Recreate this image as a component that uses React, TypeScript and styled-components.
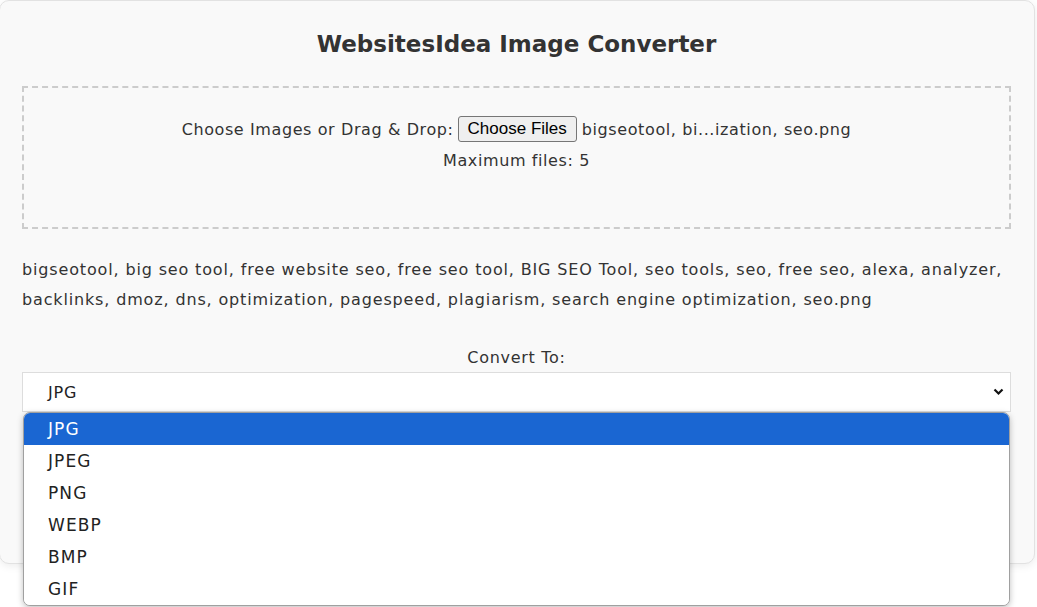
import React from "react";
import styled, { createGlobalStyle } from "styled-components";

const GlobalStyle = createGlobalStyle`
  html, body {
    margin: 0;
    padding: 0;
    background: #ffffff;
    font-family: "DejaVu Sans", "Noto Sans", sans-serif;
    color: #222;
  }
`;

const formats = ["JPG", "JPEG", "PNG", "WEBP", "BMP", "GIF"];

const keywordLines = [
  "bigseotool, big seo tool, free website seo, free seo tool, BIG SEO Tool, seo tools, seo, free seo, alexa, analyzer,",
  "backlinks, dmoz, dns, optimization, pagespeed, plagiarism, search engine optimization, seo.png",
];

const Chevron = () => (
  <svg width="11" height="8" viewBox="0 0 11 8">
    <path d="M1.5 1.5 L5.5 5.5 L9.5 1.5" fill="none" stroke="#111" strokeWidth="2.2" />
  </svg>
);

export default function App() {
  return (
    <>
      <GlobalStyle />
      <Styled.Page>
        <Styled.Card>
          <Styled.Title>WebsitesIdea Image Converter</Styled.Title>
          <Styled.DropZone>
            <Styled.Line>
              Choose Images or Drag &amp; Drop:
              <Styled.FileButton type="button">Choose Files</Styled.FileButton>
              bigseotool, bi...ization, seo.png
            </Styled.Line>
            <Styled.Line>Maximum files: 5</Styled.Line>
          </Styled.DropZone>
          <Styled.Keywords>
            {keywordLines.map((l) => (
              <Styled.KeywordLine key={l}>{l}</Styled.KeywordLine>
            ))}
          </Styled.Keywords>
          <Styled.Label>Convert To:</Styled.Label>
          <Styled.SelectWrap>
            <Styled.Select>
              <span>JPG</span>
              <Chevron />
            </Styled.Select>
            <Styled.Menu>
              {formats.map((f, i) => (
                <Styled.Option key={f} $active={i === 0}>
                  {f}
                </Styled.Option>
              ))}
            </Styled.Menu>
          </Styled.SelectWrap>
          <Styled.Spacer />
        </Styled.Card>
      </Styled.Page>
    </>
  );
}

const Styled = {
  Page: styled.div`
    width: 1037px;
    height: 607px;
    overflow: hidden;
    background: #ffffff;
  `,
  Card: styled.div`
    box-sizing: border-box;
    width: 1036px;
    margin-left: -1px;
    padding: 0 23px 0 22px;
    background: #f9f9f9;
    border: 1px solid #e2e2e2;
    border-radius: 10px;
    box-shadow: 0 2px 8px rgba(0, 0, 0, 0.08);
  `,
  Title: styled.h1`
    margin: 0;
    padding: 30px 0 0;
    height: 55px;
    text-align: center;
    font-size: 23px;
    font-weight: 600;
    color: #333;
  `,
  DropZone: styled.div`
    box-sizing: border-box;
    height: 143px;
    border: 2px dashed #cccccc;
    padding: 26px 10px 0;
    text-align: center;
  `,
  Line: styled.div`
    line-height: 31px;
    font-size: 16px;
    letter-spacing: 0.6px;
    color: #333;
  `,
  FileButton: styled.button`
    font-family: Arial, "Liberation Sans", sans-serif;
    font-size: 17px;
    letter-spacing: 0;
    height: 26px;
    padding: 0 9px;
    margin: 0 5px 0 4px;
    background: #efefef;
    border: 1px solid #767676;
    border-radius: 3px;
    color: #000;
    vertical-align: 1px;
  `,
  Keywords: styled.div`
    margin: 26px 0 0;
  `,
  KeywordLine: styled.div`
    font-size: 16px;
    letter-spacing: 0.85px;
    line-height: 30px;
    white-space: nowrap;
    color: #333;
  `,
  Label: styled.div`
    margin-top: 33px;
    text-align: center;
    font-size: 16px;
    letter-spacing: 0.7px;
    line-height: 20px;
    color: #333;
  `,
  SelectWrap: styled.div`
    position: relative;
    margin-top: 4px;
  `,
  Select: styled.div`
    box-sizing: border-box;
    height: 40px;
    display: flex;
    align-items: center;
    justify-content: space-between;
    padding: 0 6px 0 25px;
    background: #ffffff;
    border: 1px solid #dddddd;
    font-size: 16px;
    letter-spacing: 0.8px;
    color: #222;
  `,
  Menu: styled.div`
    position: absolute;
    top: 40px;
    left: 1px;
    right: 1px;
    background: #ffffff;
    border: 1px solid #a0a0a0;
    border-radius: 7px;
    overflow: hidden;
    box-shadow: 0 2px 6px rgba(0, 0, 0, 0.25);
    z-index: 2;
  `,
  Option: styled.div<{ $active: boolean }>`
    height: 32px;
    display: flex;
    align-items: center;
    padding-left: 24px;
    font-size: 17px;
    letter-spacing: 1.1px;
    background: ${(p) => (p.$active ? "#1a66d2" : "#ffffff")};
    color: ${(p) => (p.$active ? "#ffffff" : "#222")};
  `,
  Spacer: styled.div`
    height: 151px;
  `,
};
